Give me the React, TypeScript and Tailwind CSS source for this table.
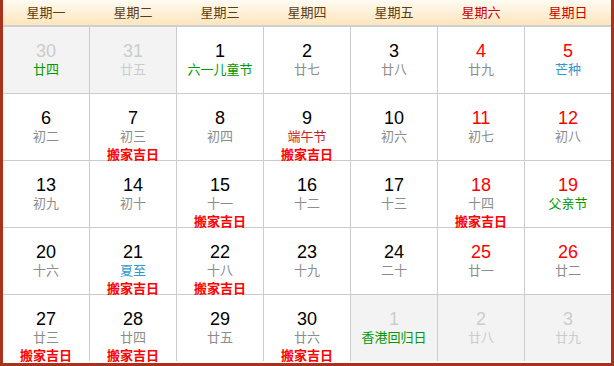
import React from "react";

type Day = {
  n: number;
  l: string;
  lc?: string;
  other?: boolean;
  wk?: boolean;
  mv?: boolean;
};

const G = "text-[#009900]";
const B = "text-[#3399cc]";
const DR = "text-[#cc2222]";

const days: Day[] = [
  { n: 30, l: "廿四", lc: G, other: true },
  { n: 31, l: "廿五", other: true },
  { n: 1, l: "六一儿童节", lc: G },
  { n: 2, l: "廿七" },
  { n: 3, l: "廿八" },
  { n: 4, l: "廿九", wk: true },
  { n: 5, l: "芒种", lc: B, wk: true },
  { n: 6, l: "初二" },
  { n: 7, l: "初三", mv: true },
  { n: 8, l: "初四" },
  { n: 9, l: "端午节", lc: DR, mv: true },
  { n: 10, l: "初六" },
  { n: 11, l: "初七", wk: true },
  { n: 12, l: "初八", wk: true },
  { n: 13, l: "初九" },
  { n: 14, l: "初十" },
  { n: 15, l: "十一", mv: true },
  { n: 16, l: "十二" },
  { n: 17, l: "十三" },
  { n: 18, l: "十四", wk: true, mv: true },
  { n: 19, l: "父亲节", lc: G, wk: true },
  { n: 20, l: "十六" },
  { n: 21, l: "夏至", lc: B, mv: true },
  { n: 22, l: "十八", mv: true },
  { n: 23, l: "十九" },
  { n: 24, l: "二十" },
  { n: 25, l: "廿一", wk: true },
  { n: 26, l: "廿二", wk: true },
  { n: 27, l: "廿三", mv: true },
  { n: 28, l: "廿四", mv: true },
  { n: 29, l: "廿五" },
  { n: 30, l: "廿六", mv: true },
  { n: 1, l: "香港回归日", lc: G, other: true },
  { n: 2, l: "廿八", other: true },
  { n: 3, l: "廿九", other: true },
];

const heads = ["星期一", "星期二", "星期三", "星期四", "星期五", "星期六", "星期日"];

export default function App() {
  return (
    <div
      className="w-[614px] h-[366px] bg-white border-x-[3px] border-b-[3px] border-[#a8321e] overflow-hidden"
      style={{ fontFamily: '"Liberation Sans", Arial, "Noto Sans CJK SC", sans-serif' }}
    >
      <div className="flex gap-px h-[27px] bg-gradient-to-b from-[#fffbf2] to-[#fde5bd] border-b-2 border-[#cfcfcf]">
        {heads.map((h, i) => (
          <div
            key={h}
            className={`w-[86px] flex items-center justify-center text-[13px] ${
              i >= 5 ? "text-[#cc0000]" : "text-[#5c3c10]"
            }`}
          >
            {h}
          </div>
        ))}
      </div>
      <div className="grid grid-cols-[repeat(7,86px)] grid-rows-[repeat(5,66px)] gap-px bg-[#cccccc]">
        {days.map((d, i) => {
          const numColor = d.other ? "text-[#cccccc]" : d.wk ? "text-[#ff0000]" : "text-black";
          const lunColor = d.lc ? d.lc : d.other ? "text-[#cccccc]" : "text-[#8c8c8c]";
          return (
            <div
              key={i}
              className={`flex flex-col items-center pt-[14px] ${d.other ? "bg-[#f3f3f3]" : "bg-white"}`}
            >
              <div className={`text-[18px] leading-[20px] ${numColor}`}>{d.n}</div>
              <div className={`text-[13px] leading-[18px] ${lunColor}`}>{d.l}</div>
              {d.mv && (
                <div className="text-[13px] leading-[18px] font-bold text-[#ff0000]">搬家吉日</div>
              )}
            </div>
          );
        })}
      </div>
    </div>
  );
}
